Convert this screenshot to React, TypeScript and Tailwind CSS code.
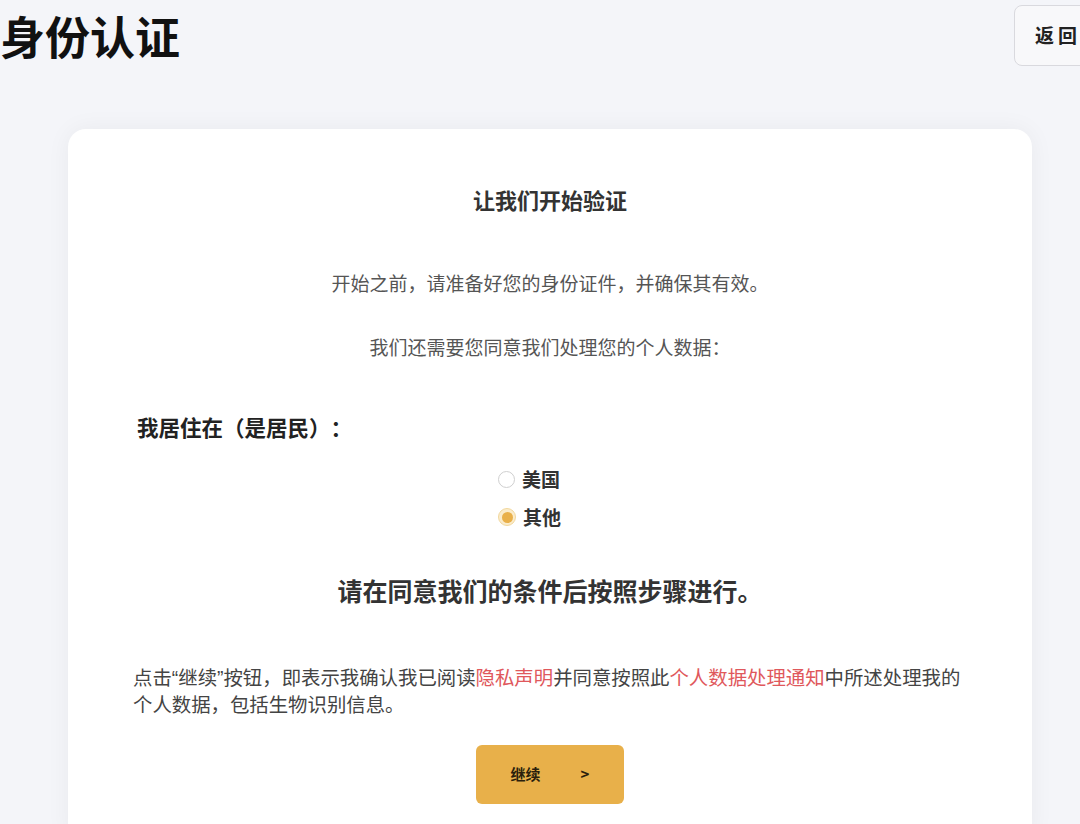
import React, { useState } from 'react';

const font = { fontFamily: '"Noto Sans CJK SC", "Noto Sans", sans-serif' };

const Radio = ({ checked, label, onClick }: { checked: boolean; label: string; onClick: () => void }) => (
  <label className="flex items-center h-[28px] cursor-pointer" onClick={onClick}>
    {checked ? (
      <span className="w-[18px] h-[18px] rounded-full bg-[#fbeccb] border border-[#f1d79d] flex items-center justify-center">
        <span className="w-[11px] h-[11px] rounded-full bg-[#e9b04a]" />
      </span>
    ) : (
      <span className="w-[17px] h-[17px] rounded-full border border-[#cfcfcf] bg-white" />
    )}
    <span className="ml-[7px] text-[19px] font-semibold text-[#333]">{label}</span>
  </label>
);

export default function App() {
  const [region, setRegion] = useState('other');

  return (
    <div className="w-[1080px] h-[824px] overflow-hidden bg-[#f4f5f9] [text-spacing-trim:space-all]" style={font}>
      <div className="w-[1100px]">
        <div className="flex justify-between items-start">
          <h1 className="mt-[6px] text-[45px] leading-[60px] font-bold text-[#111]">身份认证</h1>
          <button className="mt-[5px] w-[86px] h-[61px] border border-[#d9d9de] rounded-l-[8px] bg-[#f8f8fa] text-left pl-[20px] text-[19px] font-semibold text-[#222] tracking-[4px]">
            返回
          </button>
        </div>

        <div className="mx-auto mt-[63px] w-[964px] bg-white rounded-[18px] shadow-[0_0_24px_rgba(0,0,0,0.05)] px-[65px] pt-[55px] pb-[40px]">
          <h2 className="text-center text-[22px] leading-[30px] font-bold text-[#333]">让我们开始验证</h2>
          <p className="mt-[55px] text-center text-[19px] leading-[28px] text-[#555]">
            开始之前，请准备好您的身份证件，并确保其有效。
          </p>
          <p className="mt-[36px] text-center text-[19px] leading-[28px] text-[#555]">
            我们还需要您同意我们处理您的个人数据：
          </p>

          <div className="mt-[52px] ml-[4px] text-[21.5px] leading-[28px] font-bold text-[#222]">我居住在（是居民）：</div>

          <div className="mt-[24px] mx-auto w-[104px] flex flex-col gap-[10px]">
            <Radio checked={region === 'us'} label="美国" onClick={() => setRegion('us')} />
            <Radio checked={region === 'other'} label="其他" onClick={() => setRegion('other')} />
          </div>

          <h3 className="mt-[42px] text-center text-[25px] leading-[34px] font-bold text-[#333]">
            请在同意我们的条件后按照步骤进行。
          </h3>

          {/* latin font first so the quotes stay narrow, CJK falls through */}
          <p className="mt-[58px] text-[19.4px] leading-[27px] text-[#444] font-['Liberation_Sans','Noto_Sans_CJK_SC',sans-serif]">
            点击“继续”按钮，即表示我确认我已阅读<span className="text-[#e0585c]">隐私声明</span>并同意按照此
            <span className="text-[#e0585c]">个人数据处理通知</span>中所述处理我的个人数据，包括生物识别信息。
          </p>

          <div className="mt-[26px] flex justify-center">
            <button className="w-[148px] h-[59px] rounded-[6px] bg-[#e8b04a] flex items-center justify-center gap-[40px] text-[15px] font-bold text-[#2a1e0c]">
              <span>继续</span>
              <span>&gt;</span>
            </button>
          </div>
        </div>
      </div>
    </div>
  );
}
